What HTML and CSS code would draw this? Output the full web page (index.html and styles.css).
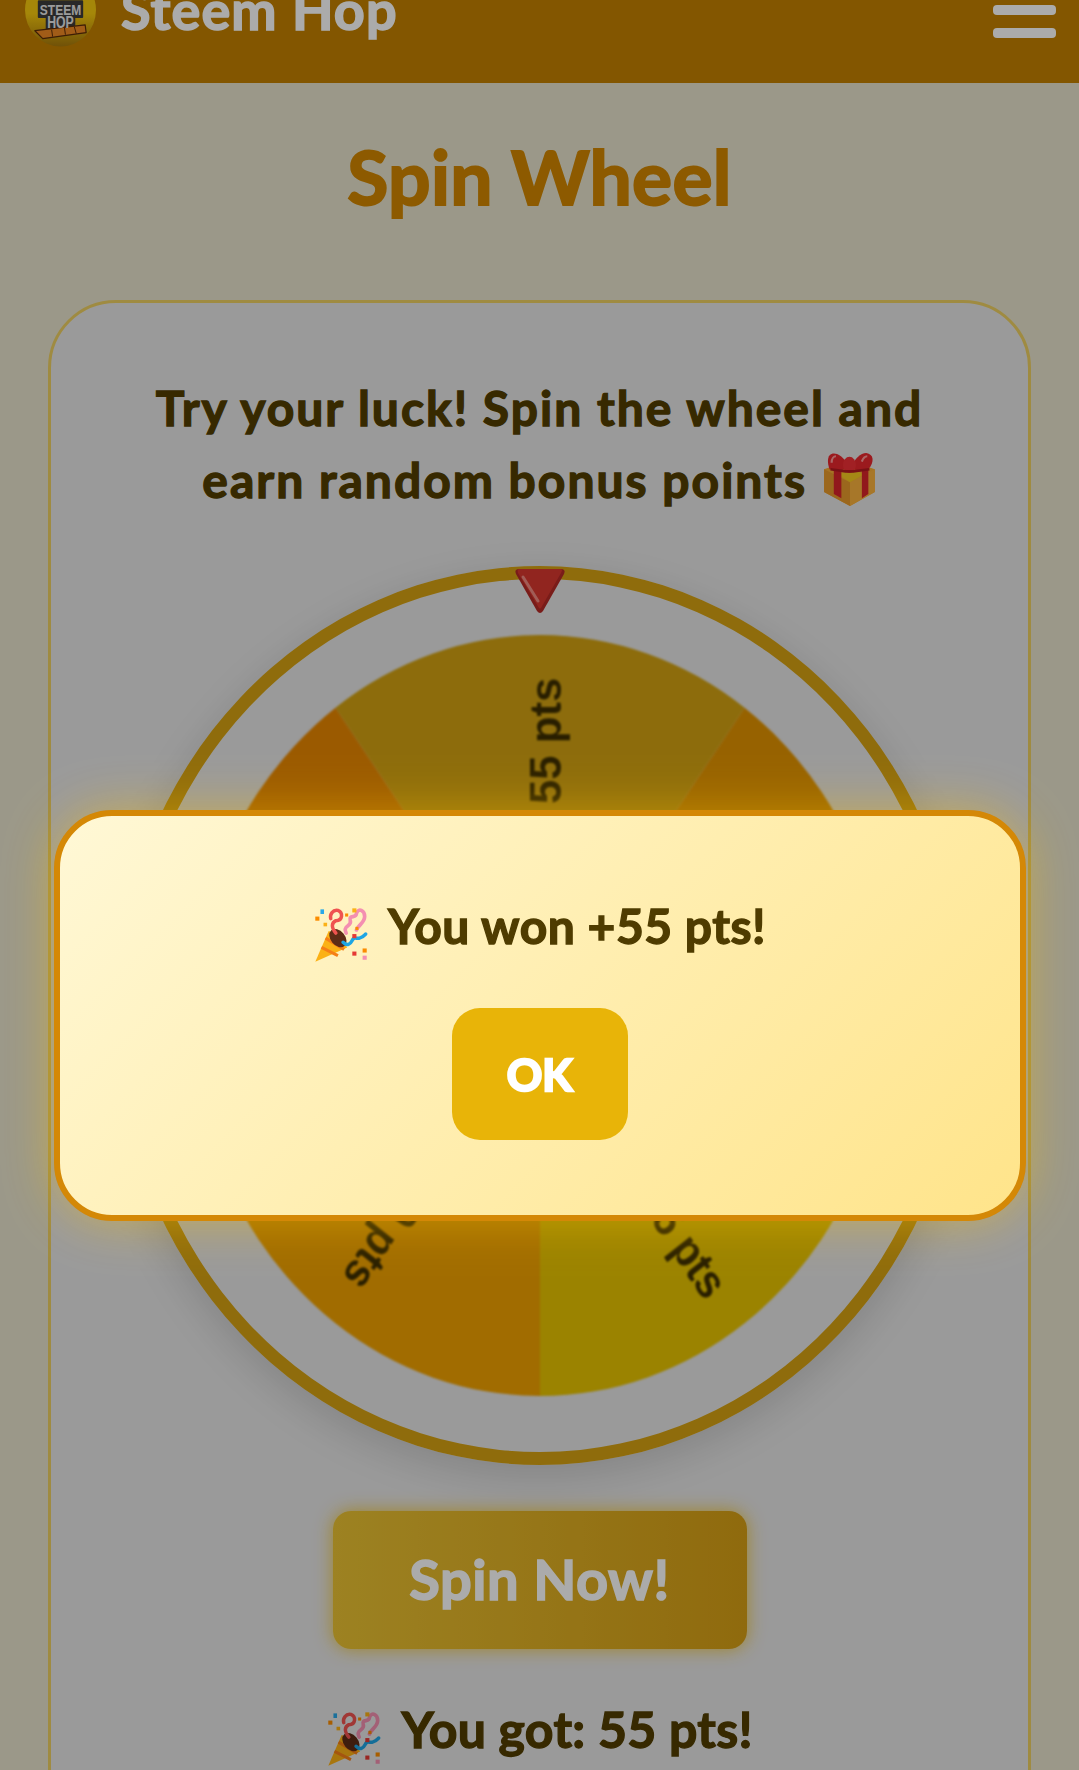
FILE: index.html
```html
<!DOCTYPE html>
<html lang="en">
<head>
<meta charset="utf-8">
<title>Spin Wheel</title>
<link rel="stylesheet" href="styles.css">
</head>
<body>
<svg class="defs" width="0" height="0" aria-hidden="true">
  <defs>
    <symbol id="popper" viewBox="0 0 70 70">
      <path d="M10 64 L23 34 Q33 36 41 50 Z" fill="#fbb116"/>
      <path d="M16 50 L32 58 M20 41 L38 52" stroke="#f57f17" stroke-width="3" fill="none"/>
      <ellipse cx="32" cy="41" rx="7" ry="10" transform="rotate(-40 32 41)" fill="#5d2c16"/>
      <path d="M30 36 C25 30 26 26 30 24 C37 24 37 16 32 14 C27 13 24 18 25 22" stroke="#ef5350" stroke-width="3.4" fill="none" stroke-linecap="round"/>
      <path d="M40 36 C36 28 46 30 44 24 C42 18 50 22 50 17 C52 11 58 14 58 20 C58 26 52 28 50 33" stroke="#f48fb1" stroke-width="3.6" fill="none" stroke-linecap="round"/>
      <path d="M37 45 C41 49 44 47 46 43 C48 39 50 42 53 41 C57 40 58 38 59 37" stroke="#1ea5e4" stroke-width="3.4" fill="none" stroke-linecap="round"/>
      <rect x="10" y="20" width="4" height="4" fill="#fb8c00"/>
      <rect x="15" y="13" width="3.5" height="4.5" fill="#29a8e8"/>
      <rect x="18" y="26" width="3.5" height="3.5" fill="#fbb116"/>
      <rect x="46" y="12" width="4" height="4" fill="#fbb116"/>
      <rect x="39" y="17" width="3" height="3" fill="#fb8c00"/>
      <rect x="49" y="30" width="3" height="3" fill="#fb8c00"/>
      <rect x="46" y="37" width="4" height="4" fill="#e53935"/>
      <rect x="46" y="54" width="4" height="4" fill="#e53935"/>
      <rect x="56" y="51" width="4" height="4" fill="#fb8c00"/>
      <rect x="56" y="58" width="4" height="4" fill="#f48fb1"/>
    </symbol>
    <symbol id="gift" viewBox="0 0 50 50">
      <path d="M1 15 L24 7 L48 15 L48 36 L25 49 L1 36 Z" fill="#f7ad38"/>
      <path d="M1 15 L25 27 L25 49 L1 36 Z" fill="#e89a2c"/>
      <path d="M25 27 L48 15 L48 36 L25 49 Z" fill="#f9b23e"/>
      <path d="M14 20 L26 14 L38 20 L25 27 Z" fill="#f7c921"/>
      <path d="M10 15 L17 15 L17 42 L10 38 Z" fill="#d9252b"/>
      <path d="M36 15 L42 15 L42 38 L36 42 Z" fill="#d9252b"/>
      <path d="M6 15 C2 3 7 -1 13 1 C18 3 22 8 24 14 L14 17 Z" fill="#e8272d"/>
      <path d="M26 14 C29 5 35 0 40 0 C47 1 48 8 42 15 L33 17 Z" fill="#e8272d"/>
      <ellipse cx="24.500" cy="11" rx="6" ry="7.500" fill="#f03136"/>
      <path d="M8 9 C8 5 10 3 12 3" stroke="#ff9a9a" stroke-width="2" fill="none"/>
      <path d="M36 8 C37 5 39 3 41 3" stroke="#ff9a9a" stroke-width="2" fill="none"/>
      <path d="M7 15 L21 17 L28 17 L43 15" stroke="#b31a20" stroke-width="2.400" fill="none"/>
    </symbol>
  </defs>
</svg>

<div class="page">
  <header class="topbar">
    <div class="brand">
      <svg class="logo" viewBox="0 0 72 74" aria-hidden="true">
        <defs>
          <linearGradient id="logoBg" x1="0" y1="0" x2="0" y2="1">
            <stop offset="0.55" stop-color="#f7c90e"/>
            <stop offset="1" stop-color="#a87a0c"/>
          </linearGradient>
        </defs>
        <ellipse cx="36" cy="37" rx="36" ry="37" fill="url(#logoBg)"/>
        <path d="M14 28 L58 28 L58 44 L50 44 L50 56 L22 56 L22 44 L14 44 Z" fill="#3c3c3c" stroke="#3c3c3c" stroke-width="2" stroke-linejoin="round"/>
        <path d="M10 58 L61 52 L62 60 L18 66 Z" fill="#f08a24" stroke="#5a2c08" stroke-width="1.200" stroke-linejoin="round"/>
        <path d="M27 57 L28 64 M40 55 L41 62 M50 54 L52 61" stroke="#5a2c08" stroke-width="1"/>
        <text class="logo-text" x="36" y="42" textLength="42" lengthAdjust="spacingAndGlyphs">STEEM</text>
        <text class="logo-text logo-text-big" x="36" y="55" textLength="27" lengthAdjust="spacingAndGlyphs">HOP</text>
      </svg>
      <span class="brand-name">Steem Hop</span>
    </div>
    <div class="menu" aria-hidden="true"><span></span><span></span><span></span></div>
  </header>

  <main class="content">
    <h1 class="title">Spin Wheel</h1>
    <section class="card">
      <p class="intro">Try your luck! Spin the wheel and<br>earn random bonus points <svg class="gift"><use href="#gift"/></svg></p>
      <div class="wheel">
        <svg class="wheel-disc" viewBox="-100 -100 200 200" preserveAspectRatio="none" aria-hidden="true">
          <path d="M0 0 L-58.780 -80.900 A100 100 0 0 1 58.780 -80.900 Z" class="seg-a"/>
          <path d="M0 0 L58.780 -80.900 A100 100 0 0 1 95.110 30.900 Z" class="seg-b"/>
          <path d="M0 0 L95.110 30.900 A100 100 0 0 1 0 100 Z" class="seg-c"/>
          <path d="M0 0 L0 100 A100 100 0 0 1 -95.110 30.900 Z" class="seg-d"/>
          <path d="M0 0 L-95.110 30.900 A100 100 0 0 1 -58.780 -80.900 Z" class="seg-e"/>
          <text class="seg-label" transform="rotate(-90) translate(88.800 5.900) scale(1 1.100)">55 pts</text>
          <text class="seg-label" transform="rotate(-18) translate(88.800 5.900) scale(1 1.100)">25 pts</text>
          <text class="seg-label" transform="rotate(54) translate(88.800 5.900) scale(1 1.100)">15 pts</text>
          <text class="seg-label" transform="rotate(126) translate(88.800 5.900) scale(1 1.100)">30 pts</text>
          <text class="seg-label" transform="rotate(198) translate(88.800 5.900) scale(1 1.100)">45 pts</text>
        </svg>
        <svg class="pointer" viewBox="0 0 52 46" aria-hidden="true">
          <path d="M5 1 L47 1 Q52 1 50 6 L29 43 Q26 47 23 43 L2 6 Q0 1 5 1 Z" fill="#b52a26"/>
          <path d="M5 1 L47 1 Q49 1 47 5 L27 40 Q26 41 25 40 L4 5 Q3 1 5 1 Z" fill="#d8382f"/>
          <path d="M9 9 L24 33" stroke="#f08a80" stroke-width="3" stroke-linecap="round"/>
        </svg>
      </div>
      <button class="spin" type="button">Spin Now!</button>
      <p class="result"><svg class="popper-icon"><use href="#popper"/></svg> You got: 55 pts!</p>
    </section>
  </main>
</div>

<div class="overlay"></div>
<div class="modal-layer">
  <div class="modal">
    <p class="modal-text"><svg class="popper-icon"><use href="#popper"/></svg> You won +55 pts!</p>
    <button class="ok" type="button">OK</button>
  </div>
</div>
</body>
</html>
```

FILE: styles.css
```css
* { box-sizing: border-box; }

html, body {
  margin: 0;
  height: 1770px;
  overflow: hidden;
}

body {
  background: #e7e3cc;
  font-family: Lato, "Noto Sans", sans-serif;
  font-weight: 700;
}

.defs { position: absolute; }

.page { margin-top: -40px; }

.topbar {
  height: 123px;
  background: #c38000;
  padding: 13px 23px 36px 25px;
  display: flex;
  justify-content: space-between;
  align-items: center;
}

.brand {
  display: flex;
  align-items: center;
  gap: 25px;
}

.logo { width: 71px; height: 74px; }

.logo-text {
  font-family: "Liberation Sans", sans-serif;
  font-size: 14px;
  font-weight: 700;
  fill: #e8e8e8;
  text-anchor: middle;
}

.logo-text-big { font-size: 16px; }

.brand-name {
  color: #fff;
  font-size: 54px;
  font-weight: 700;
  line-height: 1;
  letter-spacing: 1.100px;
  -webkit-text-stroke: 1.5px #fff;
}

.menu {
  display: flex;
  flex-direction: column;
  gap: 13px;
  width: 63px;
}

.menu span {
  height: 10px;
  border-radius: 4px;
  background: #fff;
}

.content { padding: 0 48px; }

.title {
  margin: 48px 0 0;
  text-align: center;
  color: #d28700;
  font-size: 75px;
  line-height: 90px;
  font-weight: 700;
  letter-spacing: 0.3px;
  -webkit-text-stroke: 2px #d28700;
}

.card {
  margin-top: 79px;
  height: 1600px;
  background: #e6e6e6;
  border: 3px solid #eecf62;
  border-radius: 68px;
  display: flex;
  flex-direction: column;
  align-items: center;
}

.intro {
  margin: 69px 0 0;
  text-align: center;
  color: #523e00;
  font-size: 48px;
  line-height: 72px;
  font-weight: 700;
  letter-spacing: 2px;
  -webkit-text-stroke: 1.300px #523e00;
}

.gift {
  width: 54px;
  height: 54px;
  margin-left: 2px;
  vertical-align: -9px;
}

.wheel {
  position: relative;
  margin-top: 50px;
  width: 848px;
  height: 899px;
  border: 13px solid #d6a212;
  border-radius: 50%;
  box-shadow: 0 12px 40px rgba(0, 0, 0, 0.14);
  display: flex;
  align-items: center;
  justify-content: center;
}

.wheel-disc {
  width: 696px;
  height: 761px;
  filter: blur(1px);
}

.seg-a { fill: #d2a212; }
.seg-b { fill: #e19300; }
.seg-c { fill: #e7c300; }
.seg-d { fill: #f0a200; }
.seg-e { fill: #e78700; }

.seg-label {
  font-family: "Liberation Sans", sans-serif;
  font-size: 11.500px;
  font-weight: 700;
  fill: #3d2e00;
  text-anchor: end;
}

.pointer {
  position: absolute;
  top: -11px;
  left: 50%;
  margin-left: -26px;
  width: 52px;
  height: 46px;
}

.spin {
  margin-top: 46px;
  width: 414px;
  height: 138px;
  padding: 0 0 4px;
  border: 0;
  border-radius: 18px;
  background: linear-gradient(90deg, #eac233, #d69f15);
  box-shadow: 0 0 18px rgba(240, 190, 20, 0.8);
  color: #fff;
  font-family: inherit;
  font-size: 56px;
  font-weight: 700;
  letter-spacing: 0.5px;
  -webkit-text-stroke: 1.500px #fff;
}

.result {
  margin: 50px 0 0;
  height: 60px;
  color: #523e00;
  font-size: 50px;
  line-height: 60px;
  font-weight: 700;
  letter-spacing: 0.3px;
  -webkit-text-stroke: 1.300px #523e00;
}

.popper-icon {
  width: 72px;
  height: 72px;
  margin: -10px 1px -10px -8px;
  vertical-align: -14px;
}

.overlay {
  position: fixed;
  inset: 0;
  background: rgba(0, 0, 0, 0.33);
}

.modal-layer {
  position: fixed;
  top: 0;
  left: 0;
  right: 0;
  height: 2031px;
  display: flex;
  align-items: center;
  justify-content: center;
}

.modal {
  width: 972px;
  height: 411px;
  border: 6px solid #d48806;
  border-radius: 58px;
  background: linear-gradient(135deg, #fff8d6, #ffe48a);
  box-shadow: 0 0 50px rgba(255, 196, 0, 0.45);
  display: flex;
  flex-direction: column;
  align-items: center;
}

.modal-text {
  margin: 80px 0 0;
  height: 60px;
  color: #4f3c00;
  font-size: 48px;
  line-height: 60px;
  font-weight: 700;
  letter-spacing: 0.5px;
  -webkit-text-stroke: 1.300px #4f3c00;
}

.ok {
  margin-top: 52px;
  width: 176px;
  height: 132px;
  padding: 0;
  border: 0;
  border-radius: 28px;
  background: #e8b408;
  color: #fff;
  font-family: inherit;
  font-size: 44px;
  font-weight: 700;
  -webkit-text-stroke: 2.500px #fff;
}
```
